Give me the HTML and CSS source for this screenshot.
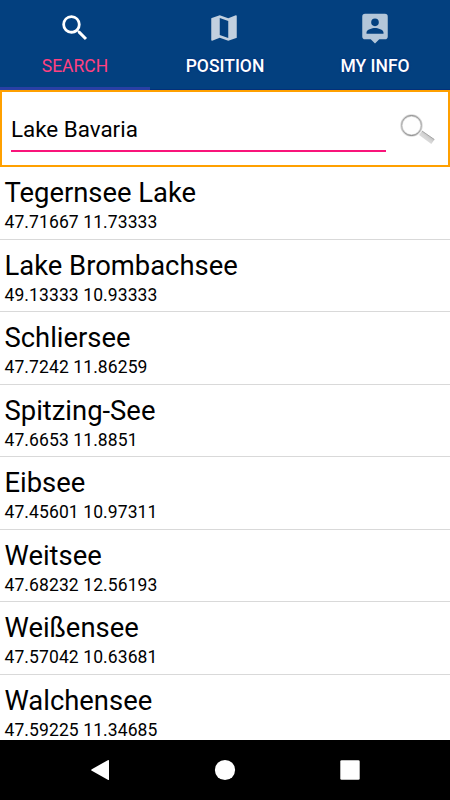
FILE: index.html
```html
<!DOCTYPE html>
<html lang="en">
<head>
<meta charset="utf-8">
<title>Lake search</title>
<link rel="stylesheet" href="styles.css">
</head>
<body>
<nav class="tabs">
  <div class="tab active">
    <svg class="tab-icon" viewBox="0 0 24 24"><path d="M15.5 14h-.79l-.28-.27A6.47 6.47 0 0 0 16 9.5 6.5 6.5 0 1 0 9.500 16c1.610 0 3.090-.59 4.230-1.570l.27.28v.79l5 4.990L20.490 19l-4.990-5zm-6 0C7.010 14 5 11.990 5 9.500S7.010 5 9.500 5 14 7.010 14 9.500 11.990 14 9.500 14z"/></svg>
    <span class="label">SEARCH</span>
  </div>
  <div class="tab">
    <svg class="tab-icon" viewBox="0 0 24 24"><path d="M20.500 3l-.16.03L15 5.100 9 3 3.360 4.900c-.21.07-.36.25-.36.48V20.500c0 .28.22.5.5.5l.16-.03L9 18.900l6 2.100 5.640-1.900c.21-.07.36-.25.36-.48V3.500c0-.28-.22-.5-.5-.5zM15 19l-6-2.110V5l6 2.110V19z"/></svg>
    <span class="label">POSITION</span>
  </div>
  <div class="tab">
    <svg class="tab-icon" viewBox="0 0 24 24"><path d="M19 2H5a2 2 0 0 0-2 2v14a2 2 0 0 0 2 2h4l3 3 3-3h4a2 2 0 0 0 2-2V4a2 2 0 0 0-2-2zm-7 3.300a2.700 2.700 0 1 1 0 5.400 2.700 2.700 0 0 1 0-5.400zM18 16H6v-.9c0-2 4-3.100 6-3.100s6 1.100 6 3.100v.9z"/></svg>
    <span class="label">MY INFO</span>
  </div>
</nav>
<form class="search">
  <div class="field">Lake Bavaria</div>
  <svg class="magnifier" viewBox="0 0 36 32">
    <defs>
      <linearGradient id="handle" x1="0" y1="1" x2="1" y2="0">
        <stop offset="0" stop-color="#eeeeee"/><stop offset=".5" stop-color="#d5d5d5"/><stop offset="1" stop-color="#999999"/>
      </linearGradient>
      <linearGradient id="ring" x1="0" y1="0" x2="0" y2="1">
        <stop offset="0" stop-color="#8c8c8c"/><stop offset=".6" stop-color="#b5b5b5"/><stop offset="1" stop-color="#858585"/>
      </linearGradient>
    </defs>
    <path d="M22 17l12.500 8.500-3.200 4.500L19 21z" fill="url(#handle)"/>
    <path d="M22 17l12.300 8.500" stroke="#a5a5a5" stroke-width="1"/>
    <circle cx="11.500" cy="11.500" r="10" fill="#fefefe" stroke="#d8d8d8" stroke-width="2.400"/>
    <circle cx="11.500" cy="11.500" r="10" fill="none" stroke="url(#ring)" stroke-width="1"/>
  </svg>
</form>
<main class="list">
  <div class="row"><div class="name">Tegernsee Lake</div><div class="coords">47.71667 11.73333</div></div>
  <div class="row"><div class="name">Lake Brombachsee</div><div class="coords">49.13333 10.93333</div></div>
  <div class="row"><div class="name">Schliersee</div><div class="coords">47.7242 11.86259</div></div>
  <div class="row"><div class="name">Spitzing-See</div><div class="coords">47.6653 11.8851</div></div>
  <div class="row"><div class="name">Eibsee</div><div class="coords">47.45601 10.97311</div></div>
  <div class="row"><div class="name">Weitsee</div><div class="coords">47.68232 12.56193</div></div>
  <div class="row"><div class="name">Weißensee</div><div class="coords">47.57042 10.63681</div></div>
  <div class="row"><div class="name">Walchensee</div><div class="coords">47.59225 11.34685</div></div>
</main>
<footer class="navbar">
  <svg class="nav-icon" viewBox="0 0 24 24"><path d="M21 2.800v18.400q0 1.300-1.200.6L3.800 12.800q-1.300-.8 0-1.600L19.800 2.200q1.200-.7 1.200.6z"/></svg>
  <svg class="nav-icon" viewBox="0 0 24 24"><circle cx="12" cy="12" r="10.100"/></svg>
  <svg class="nav-icon" viewBox="0 0 24 24"><rect x="2.300" y="2.300" width="19.400" height="19.400" rx="1.300"/></svg>
</footer>
</body>
</html>
```

FILE: styles.css
```css
* { box-sizing: border-box; }

body {
  margin: 0;
  width: 450px;
  height: 800px;
  display: flex;
  flex-direction: column;
  overflow: hidden;
  background: #fff;
  color: #000;
  font-family: Roboto, "Liberation Sans", sans-serif;
}

.tabs {
  flex: none;
  height: 90px;
  display: grid;
  grid-template-columns: repeat(3, 1fr);
  background: #03407f;
}

.tab {
  display: flex;
  flex-direction: column;
  align-items: center;
  padding-top: 11px;
  color: #fff;
  border-bottom: 1px solid #03307a;
}

.tab.active {
  color: #ff4081;
  border-bottom: 3px solid #293fa5;
}

.tab-icon {
  width: 34px;
  height: 34px;
  fill: #b3c6d9;
}

.tab:nth-child(2) .tab-icon { margin-right: 2px; fill: #c2d0df; }

.active .tab-icon { fill: #fff; }

.label {
  margin-top: 11px;
  font-size: 17.5px;
  line-height: 21px;
  font-weight: 500;
  text-shadow: 0 0 2px #00207f;
}

.active .label {
  font-weight: 400;
  text-shadow: none;
}

.search {
  flex: none;
  height: 77px;
  display: flex;
  align-items: flex-start;
  border: 2px solid #ffa000;
  padding: 22px 12px 0 9px;
}

.field {
  width: 375px;
  height: 38px;
  padding-top: 2px;
  border-bottom: 2px solid #f9147a;
  font-size: 22.4px;
  line-height: 27px;
}

.magnifier {
  width: 36px;
  height: 32px;
  margin-left: 14px;
}

.list {
  flex: 1;
  min-height: 0;
  overflow: hidden;
}

.row {
  height: 72.5px;
  padding: 10px 5px 0 4.5px;
  border-bottom: 1px solid #d9d9d9;
}

.name {
  font-size: 27.4px;
  line-height: 33px;
}

.coords {
  margin-top: 2px;
  font-size: 17.5px;
  line-height: 21px;
  letter-spacing: .1px;
}

.navbar {
  flex: none;
  height: 60px;
  display: flex;
  justify-content: center;
  align-items: center;
  gap: 101px;
  background: #000;
}

.nav-icon {
  width: 24px;
  height: 24px;
  fill: #fff;
}
```
